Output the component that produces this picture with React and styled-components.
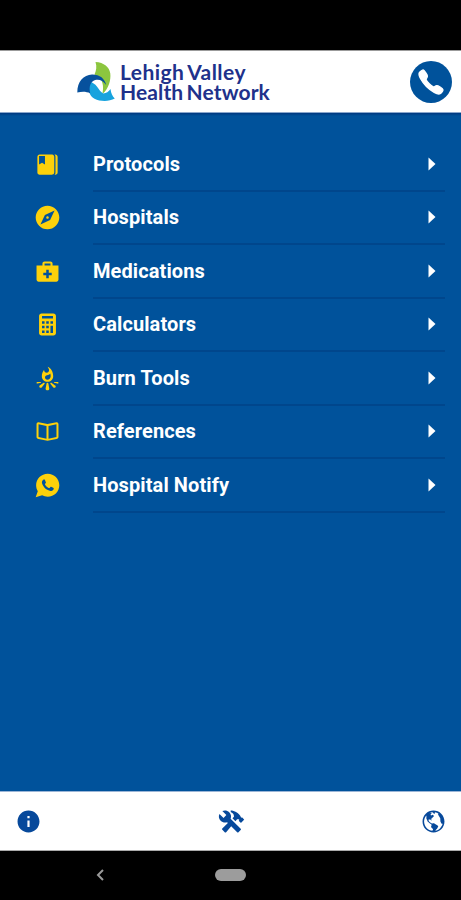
import React from "react";
import styled, { createGlobalStyle } from "styled-components";
import {
  IoIosCall,
  IoLogoWhatsapp,
  IoMdBonfire,
  IoMdBook,
  IoMdBookmarks,
  IoMdCalculator,
  IoMdCompass,
  IoMdConstruct,
  IoMdGlobe,
  IoMdInformationCircle,
  IoMdMedkit,
} from "react-icons/io";

const BLUE = "#00529b";
const YELLOW = "#fdd10a";

const GlobalStyle = createGlobalStyle`
  * { box-sizing: border-box; }
  body { margin: 0; background: #000; font-family: Roboto, "Liberation Sans", sans-serif; }
`;

const Screen = styled.div`
  display: flex;
  flex-direction: column;
  width: 461px;
  height: 900px;
  overflow: hidden;
  background: #000;
`;

const StatusBar = styled.div`
  flex: 0 0 50px;
`;

const Header = styled.header`
  flex: 0 0 63px;
  display: flex;
  align-items: center;
  justify-content: space-between;
  padding: 0 9px 0 77px;
  background: #fff;
  border-top: 1px solid #9b9b9b;
  border-bottom: 1px solid #8aa7cc;
`;

const Brand = styled.div`
  display: flex;
  align-items: center;
  gap: 5px;
`;

const Mark = styled.svg`
  width: 38px;
  height: 40px;
  display: block;
`;

const BrandName = styled.div`
  color: #20318b;
  font-family: Lato, "Open Sans", sans-serif;
  font-size: 21px;
  font-weight: 700;
  line-height: 20px;
  word-spacing: -2px;
  white-space: nowrap;
`;

const BrandLine = styled.div`
  letter-spacing: ${(p) => p.$tracking}px;
`;

const CallButton = styled.button`
  width: 42px;
  height: 42px;
  padding: 0;
  border: 0;
  border-radius: 50%;
  background: ${BLUE};
  color: #fff;
  display: grid;
  place-items: center;

  svg {
    width: 32px;
    height: 32px;
    stroke: currentColor;
    stroke-width: 22px;
    stroke-linejoin: round;
  }
`;

const Menu = styled.nav`
  flex: 0 0 678px;
  padding: 25px 16px 0 0;
  background: linear-gradient(#00387f 0, ${BLUE} 3px);
`;

const Row = styled.a`
  height: 53.5px;
  display: grid;
  grid-template-columns: 93px 1fr;
  color: #fff;
  text-decoration: none;
`;

const RowIcon = styled.span`
  display: grid;
  place-items: center;
  padding: 0 0 1px 1px;
  color: ${YELLOW};

  svg {
    width: 27px;
    height: 27px;
  }
`;

const RowBody = styled.span`
  display: flex;
  align-items: center;
  justify-content: space-between;
  padding-right: 9px;
  border-bottom: 2px solid #00468c;
`;

const Label = styled.span`
  font-size: 20px;
  font-weight: 700;
  line-height: 24px;
  letter-spacing: 0.1px;
  white-space: nowrap;
`;

const Caret = styled.svg`
  display: block;
  width: 8px;
  height: 14px;
  fill: #fff;
`;

const Footer = styled.footer`
  flex: 0 0 60px;
  display: flex;
  align-items: center;
  justify-content: space-between;
  padding: 0 14px 0 15px;
  color: #07499b;
  background: #fff;
  border-top: 1px solid #9bb5d6;
  border-bottom: 1px solid #aaa;

  svg {
    width: 27px;
    height: 27px;
  }
`;

const SystemBar = styled.div`
  flex: 0 0 48px;
  display: grid;
  grid-template-columns: 199px 63px 199px;
  place-items: center;
`;

const HomePill = styled.span`
  width: 31px;
  height: 12px;
  border-radius: 6px;
  background: #9c9c9c;
`;

const Back = styled.svg`
  width: 8px;
  height: 12px;
  fill: none;
  stroke: #9a9a9a;
  stroke-width: 2;
`;

const items = [
  ["Protocols", IoMdBookmarks],
  ["Hospitals", IoMdCompass],
  ["Medications", IoMdMedkit],
  ["Calculators", IoMdCalculator],
  ["Burn Tools", IoMdBonfire],
  ["References", IoMdBook],
  ["Hospital Notify", IoLogoWhatsapp],
];

export default function App() {
  return (
    <Screen>
      <GlobalStyle />
      <StatusBar />
      <Header>
        <Brand>
          <Mark viewBox="0 0 38 40" aria-hidden="true">
            <path fill="#8cc63f" d="M18.500 0C27 .5 32.500 5 33.300 11.500 34 17.500 32 26.500 25.300 32.300c1.500-6 .8-11.500-1.600-15.300-1.500-2.200-3.700-3.600-6.200-4.400C19.300 8.500 20 4.500 18.500 0Z" />
            <path fill="#17a3de" d="M12.500 19.500c3 .8 5.500 2.500 7.600 5.200 2 2.700 3.700 5.500 6.200 6.800 3-.2 5.400-1.800 7.200-4.500.5 4.200 2 7.200 4.300 9.600-6 3.400-14.800 3-20.300.200-5.300-2.800-7.300-10-5-17.300Z" />
            <path fill="#07519d" d="M.3 30.500C.3 19.500 6.500 12.800 15 12.500c7.500-.2 12.800 4 14.200 10.500-3.200-4.500-7-6-11-5-4.700 1.300-6.600 6.800-5 13.200-4-1.800-8-2-12.900-.7Z" />
          </Mark>
          <BrandName>
            <BrandLine $tracking={0.45}>Lehigh Valley</BrandLine>
            <BrandLine $tracking={0.12}>Health Network</BrandLine>
          </BrandName>
        </Brand>
        <CallButton aria-label="Call">
          <IoIosCall />
        </CallButton>
      </Header>
      <Menu>
        {items.map(([label, Glyph]) => (
          <Row key={label}>
            <RowIcon><Glyph /></RowIcon>
            <RowBody>
              <Label>{label}</Label>
              <Caret viewBox="0 0 8 14"><path d="M.5.5 7.500 7l-7 6.500Z" /></Caret>
            </RowBody>
          </Row>
        ))}
      </Menu>
      <Footer>
        <IoMdInformationCircle />
        <IoMdConstruct />
        <IoMdGlobe />
      </Footer>
      <SystemBar>
        <Back viewBox="0 0 8 12"><path d="M7 1 2 6l5 5" /></Back>
        <HomePill />
      </SystemBar>
    </Screen>
  );
}
